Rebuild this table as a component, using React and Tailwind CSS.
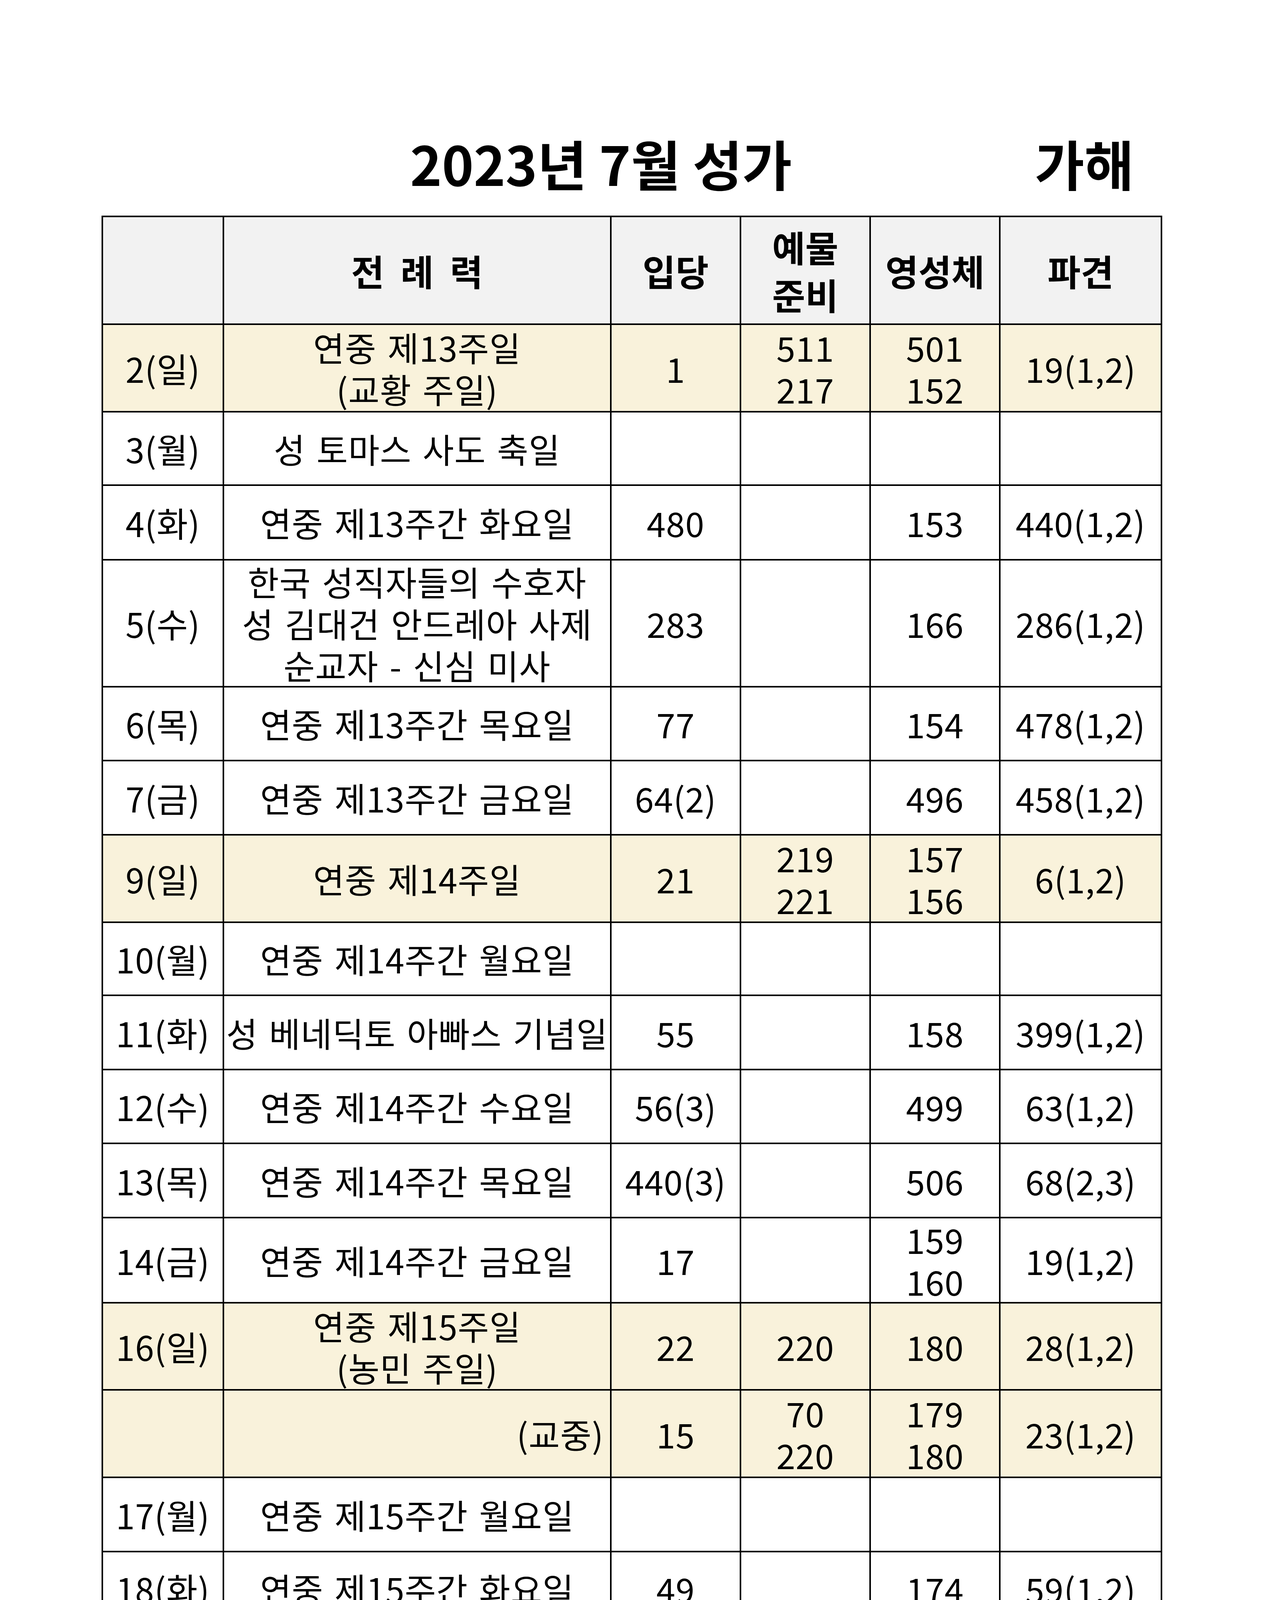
import React from 'react';

// ── 2023년 7월 성가표 ─────────────────────────────────────────────────────────
// h: row height in px, sun: beige (주일) row, right: liturgy text pushed right
const rows = [
  { day: '2(일)',  title: ['연중 제13주일', '(교황 주일)'], ip: '1',    ye: ['511', '217'], yo: ['501', '152'], pa: '19(1,2)',  h: 224, sun: true },
  { day: '3(월)',  title: ['성 토마스 사도 축일'],          h: 188 },
  { day: '4(화)',  title: ['연중 제13주간 화요일'],         ip: '480',  yo: ['153'], pa: '440(1,2)', h: 191 },
  { day: '5(수)',  title: ['한국 성직자들의 수호자', '성 김대건 안드레아 사제', '순교자 - 신심 미사'], ip: '283', yo: ['166'], pa: '286(1,2)', h: 322 },
  { day: '6(목)',  title: ['연중 제13주간 목요일'],         ip: '77',   yo: ['154'], pa: '478(1,2)', h: 189 },
  { day: '7(금)',  title: ['연중 제13주간 금요일'],         ip: '64(2)', yo: ['496'], pa: '458(1,2)', h: 190 },
  { day: '9(일)',  title: ['연중 제14주일'],                ip: '21',   ye: ['219', '221'], yo: ['157', '156'], pa: '6(1,2)', h: 224, sun: true },
  { day: '10(월)', title: ['연중 제14주간 월요일'],         h: 187 },
  { day: '11(화)', title: ['성 베네딕토 아빠스 기념일'],    ip: '55',   yo: ['158'], pa: '399(1,2)', h: 190 },
  { day: '12(수)', title: ['연중 제14주간 수요일'],         ip: '56(3)', yo: ['499'], pa: '63(1,2)', h: 189 },
  { day: '13(목)', title: ['연중 제14주간 목요일'],         ip: '440(3)', yo: ['506'], pa: '68(2,3)', h: 190 },
  { day: '14(금)', title: ['연중 제14주간 금요일'],         ip: '17',   yo: ['159', '160'], pa: '19(1,2)', h: 214 },
  { day: '16(일)', title: ['연중 제15주일', '(농민 주일)'], ip: '22',   ye: ['220'], yo: ['180'], pa: '28(1,2)', h: 223, sun: true },
  { day: '',       title: ['(교중)'], right: true,          ip: '15',   ye: ['70', '220'], yo: ['179', '180'], pa: '23(1,2)', h: 224, sun: true },
  { day: '17(월)', title: ['연중 제15주간 월요일'],         h: 190 },
  { day: '18(화)', title: ['연중 제15주간 화요일'],         ip: '49',   yo: ['174'], pa: '59(1,2)', h: 189 },
  { day: '19(수)', title: ['연중 제15주간 수요일'],         ip: '48(3)', yo: ['172', '176'], pa: '439(1,2)', h: 214 },
  { day: '20(목)', title: ['연중 제15주간 목요일'],         ip: '437(2)', yo: ['506'], pa: '436(1,2)', h: 189 },
  { day: '21(금)', title: ['연중 제15주간 금요일'],         ip: '444(2)', yo: ['498'], pa: '458(1,2)', h: 190 },
  { day: '23(일)', title: ['연중 제16주일', '(조부모와 노인의 날)'], ip: '401(2)', ye: ['217', '511'], yo: ['164', '185'], pa: '438(2,3)', h: 224, sun: true },
  { day: '24(월)', title: ['연중 제16주간 월요일'],         h: 188 },
  { day: '25(화)', title: ['성 야고보 사도 축일'],          ip: '290',  yo: ['165'], pa: '31(1,2)', h: 188 },
  { day: '26(수)', title: ['복되신 동정 마리아의', '부모 성 요아킴과 성녀', '안나 기념일'], ip: '17(3)', yo: ['163'], pa: '294(1,2)', h: 325 },
  { day: '27(목)', title: ['연중 제16주간 목요일'],         ip: '49',   yo: ['167'], pa: '34(2,3)', h: 189 },
  { day: '28(금)', title: ['연중 제16주간 금요일'],         ip: '440(3)', yo: ['168', '169'], pa: '64(2,3)', h: 215 },
  { day: '30(일)', title: ['연중 제17주일'],                ip: '24',   ye: ['459', '216'], yo: ['170', '197'], pa: '450(1,2)', h: 224, sun: true },
  { day: '31(월)', title: ['성 이냐시오 데 로욜라', '사제 기념일'], h: 215 },
];

function Lines({ items }) {
  if (!items) return null;
  return items.map((t, i) => <div key={i}>{t}</div>);
}

const cell = 'border-[4px] border-black p-0 align-middle text-center whitespace-nowrap';

export default function App() {
  return (
    <div className="bg-white text-black font-['Noto_Sans_CJK_KR','Noto_Sans',sans-serif]">
      {/* Title */}
      <div className="h-[552px] pt-[336px]">
        <div className="flex text-[138px] leading-[160px] font-bold">
          <span className="ml-[1050px]">2023년 7월 성가</span>
          <span className="ml-[622px]">가해</span>
        </div>
      </div>

      <table className="ml-[260px] w-[2712px] table-fixed border-collapse">
        <colgroup>
          <col className="w-[310px]" />
          <col className="w-[992px]" />
          <col className="w-[332px]" />
          <col className="w-[332px]" />
          <col className="w-[332px]" />
          <col className="w-[414px]" />
        </colgroup>
        <thead>
          <tr className="h-[276px] bg-[#f2f2f2] text-[92px] leading-[122px] font-bold">
            <th className={cell}></th>
            <th className={`${cell} whitespace-pre`}>전  례  력</th>
            <th className={cell}>입당</th>
            <th className={cell}><div>예물</div><div>준비</div></th>
            <th className={cell}>영성체</th>
            <th className={cell}>파견</th>
          </tr>
        </thead>
        <tbody className="text-[87px] leading-[107px] tracking-[1px] [word-spacing:8px]">
          {rows.map((r, i) => (
            <tr key={i} className={r.sun ? 'bg-[#f9f2db]' : 'bg-white'} style={{ height: r.h }}>
              <td className={cell}>{r.day}</td>
              <td className={`${cell} ${r.right ? 'text-right pr-[16px]' : ''}`}><Lines items={r.title} /></td>
              <td className={cell}>{r.ip}</td>
              <td className={cell}><Lines items={r.ye} /></td>
              <td className={cell}><Lines items={r.yo} /></td>
              <td className={cell}>{r.pa}</td>
            </tr>
          ))}
        </tbody>
      </table>
      <div className="h-[480px]" />
    </div>
  );
}
